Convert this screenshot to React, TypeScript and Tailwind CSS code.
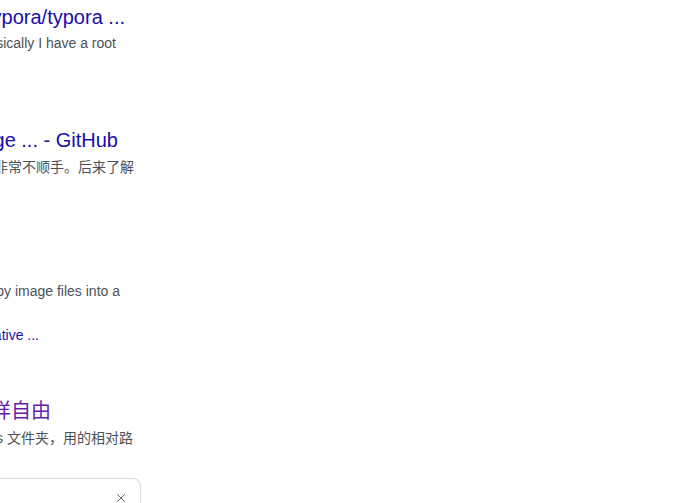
import { X } from "lucide-react";

function Line({ w, className, children }: { w: string; className: string; children: React.ReactNode }) {
  return (
    <div className={`${w} flex justify-end overflow-hidden whitespace-nowrap ${className}`}>
      <span>{children}</span>
    </div>
  );
}

export default function App() {
  return (
    <div className="w-[689px] h-[503px] overflow-hidden bg-white font-['Liberation_Sans','Noto_Sans_CJK_SC',Arial,sans-serif]">
      <div className="flex flex-col">
        <Line w="w-[125px]" className="mt-[4px] text-[20px] leading-[26px] text-[#1a0dab]">
          GitHub - typora/typora ...
        </Line>
        <Line w="w-[116px]" className="mt-[2px] text-[14px] leading-[22px] text-[#4d5156]">
          Basically I have a root
        </Line>

        <Line w="w-[118px]" className="mt-[73px] text-[20px] leading-[26px] text-[#1a0dab]">
          Typora image ... - GitHub
        </Line>
        <Line w="w-[134px]" className="mt-[3px] text-[14px] leading-[22px] text-[#4d5156]">
          用起来非常不顺手。后来了解
        </Line>

        <Line w="w-[120px]" className="mt-[102px] text-[14px] leading-[22px] text-[#4d5156]">
          Copy image files into a
        </Line>
        <Line w="w-[39px]" className="mt-[22px] text-[14px] leading-[22px] text-[#1a0dab]">
          relative ...
        </Line>

        <Line w="w-[51px]" className="mt-[52px] text-[20px] leading-[26px] text-[#681da8]">
          像写代码一样自由
        </Line>
        <Line w="w-[133px]" className="mt-[3px] text-[14px] leading-[22px] text-[#4d5156]">
          assets 文件夹，用的相对路
        </Line>

        <div className="mt-[29px] w-[141px] h-[40px] rounded-tr-[8px] border border-l-0 border-[#dadce0] flex justify-end items-start pt-[12px] pr-[12px]">
          <X size={14} strokeWidth={1.6} className="text-[#5f6368]" />
        </div>
      </div>
    </div>
  );
}
